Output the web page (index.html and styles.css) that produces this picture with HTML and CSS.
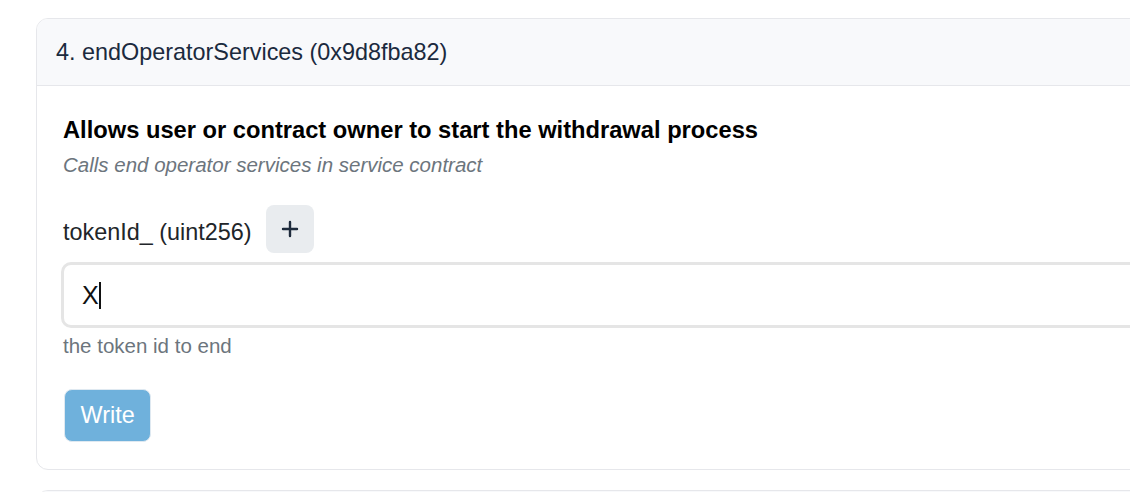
FILE: index.html
```html
<!DOCTYPE html>
<html lang="en">
<head>
  <meta charset="UTF-8">
  <meta name="viewport" content="width=device-width, initial-scale=1.0">
  <title>Write Contract</title>
  <link rel="stylesheet" href="styles.css">
</head>
<body>
  <div class="method-list">
    <div class="method-card">
      <div class="method-header">4. endOperatorServices (0x9d8fba82)</div>
      <div class="method-body">
        <h4 class="method-title">Allows user or contract owner to start the withdrawal process</h4>
        <p class="method-notice">Calls end operator services in service contract</p>

        <div class="param-row">
          <label class="param-label" for="tokenId">tokenId_ (uint256)</label>
          <button class="param-add" type="button" aria-label="Add">
            <svg width="18" height="18" viewBox="0 0 18 18" fill="none" stroke="currentColor" stroke-width="2.4" stroke-linecap="round">
              <path d="M9 2v14M2 9h14"/>
            </svg>
          </button>
        </div>
        <div class="param-input">X<span class="caret"></span></div>
        <div class="param-help">the token id to end</div>

        <button class="write-button" type="button">Write</button>
      </div>
    </div>

    <!-- next method, only its top edge is in view -->
    <div class="method-card">
      <div class="method-header method-header-empty"></div>
    </div>
  </div>
</body>
</html>
```

FILE: styles.css
```css
body {
  font-family: "Liberation Sans", Arial, Helvetica, sans-serif;
  font-size: 23.4px;
  line-height: 1.5;
  color: #212529;
  margin: 0;
  padding: 18px 0 0 36px;
  overflow: hidden;
  background: #fff;
}

.method-list {
  width: 1160px;
  display: flex;
  flex-direction: column;
  gap: 20px;
}

.method-card {
  border: 1px solid #e6e7eb;
  border-radius: 12px;
  overflow: hidden;
}

.method-header {
  background-color: #f8f9fb;
  color: #1b2a3e;
  padding: 15.5px 19px;
  border-bottom: 1px solid #e6e7eb;
}

.method-header-empty {
  height: 35px;
}

.method-body {
  padding: 30px 24px 27px 24px;
}

.method-title {
  font-size: 23.7px;
  font-weight: bold;
  line-height: 1.2;
  color: #000;
  margin: 0 0 5px 2px;
}

.method-notice {
  font-size: 20.5px;
  font-style: italic;
  color: #6c757d;
  margin: 0 0 25px 2px;
}

.param-row {
  display: flex;
  align-items: center;
  gap: 14px;
  margin-left: 2px;
}

.param-label {
  padding-top: 7px;
}

.param-add {
  width: 48px;
  height: 48px;
  border: none;
  border-radius: 8px;
  background-color: #e9ecef;
  color: #1e2b3c;
  display: inline-flex;
  align-items: center;
  justify-content: center;
  padding: 0;
}

.param-input {
  margin-top: 9px;
  height: 60px;
  border: 3px solid #e5e5e5;
  border-radius: 10px;
  padding: 0 18px;
  display: flex;
  align-items: center;
  font-size: 25px;
  color: #111;
}

.caret {
  display: inline-block;
  width: 2px;
  height: 27px;
  background: #111;
}

.param-help {
  font-size: 20.5px;
  color: #6c757d;
  margin: 2.5px 0 27px 2px;
}

.write-button {
  font-family: inherit;
  font-size: 23.4px;
  line-height: 1.5;
  color: #fff;
  background-color: #6fb1dc;
  border: 1px solid #dfe9f1;
  border-radius: 8px;
  padding: 8px 15.5px;
  margin-left: 3px;
}
```
